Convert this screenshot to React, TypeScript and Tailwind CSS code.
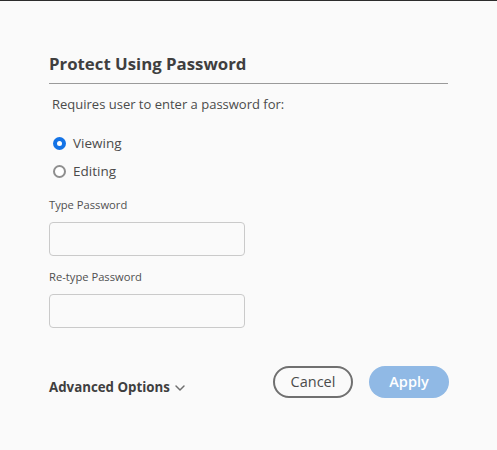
import { ChevronDown } from "lucide-react"

function Radio({ checked, label }: { checked: boolean; label: string }) {
  return (
    <label className="flex h-[28px] items-center gap-[7px]">
      {checked ? (
        <span className="flex h-[13px] w-[13px] items-center justify-center rounded-full bg-[#1473e6]">
          <span className="h-[5px] w-[5px] rounded-full bg-white" />
        </span>
      ) : (
        <span className="h-[13px] w-[13px] rounded-full border-2 border-[#8e8e8e] bg-white" />
      )}
      <span className="text-[13.5px] text-[#4b4b4b]">{label}</span>
    </label>
  )
}

export default function App() {
  return (
    <div
      className="h-[450px] w-[497px] border-t border-[#2c2c2c] bg-[#fafafa] px-[49px]"
      style={{ fontFamily: '"Open Sans", "Noto Sans", sans-serif' }}
    >
      <h1 className="mt-[51px] border-b border-[#9a9a9a] pb-[7px] text-[16.8px] font-bold leading-[24px] text-[#3f3f3f]">
        Protect Using Password
      </h1>

      <p className="ml-[3px] mt-[11px] text-[13px] leading-[18px] text-[#4b4b4b]">
        Requires user to enter a password for:
      </p>

      <div className="ml-[4px] mt-[16px] flex flex-col">
        <Radio checked label="Viewing" />
        <Radio checked={false} label="Editing" />
      </div>

      <div className="mt-[12px] text-[11.2px] leading-[16px] text-[#505050]">Type Password</div>
      <input
        type="password"
        className="mt-[9px] block h-[34px] w-[196px] rounded-[4px] border border-[#cacaca] bg-[#fafafa] outline-none"
      />

      <div className="mt-[13px] text-[11.2px] leading-[16px] text-[#505050]">Re-type Password</div>
      <input
        type="password"
        className="mt-[9px] block h-[34px] w-[196px] rounded-[4px] border border-[#cacaca] bg-[#fafafa] outline-none"
      />

      <div className="-mr-[1px] mt-[38px] flex items-center justify-between">
        <button className="mt-[11px] flex items-center gap-[2px] text-[13.3px] font-bold text-[#3f3f3f]">
          Advanced Options
          <ChevronDown size={16} strokeWidth={2.2} className="text-[#6e6e6e]" />
        </button>
        <div className="flex gap-[16px]">
          <button className="h-[32px] w-[80px] rounded-full border-2 border-[#707070] text-[14.5px] text-[#4b4b4b]">
            Cancel
          </button>
          <button className="h-[32px] w-[80px] rounded-full bg-[#90b9e5] text-[14.5px] font-semibold text-white">
            Apply
          </button>
        </div>
      </div>
    </div>
  )
}
